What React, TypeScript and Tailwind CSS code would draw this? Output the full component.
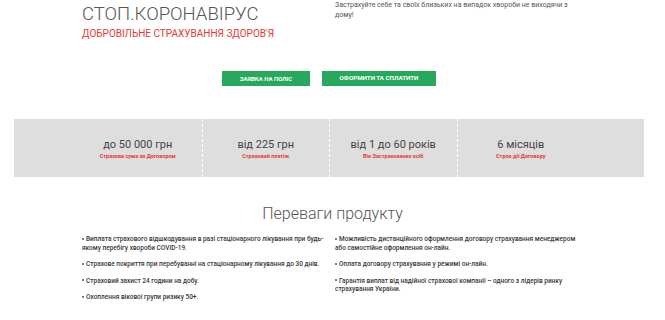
import React from 'react';

const stats = [
  { value: 'до 50 000 грн', label: 'Страхова сума за Договором' },
  { value: 'від 225 грн', label: 'Страховий платіж' },
  { value: 'від 1 до 60 років', label: 'Вік Застрахованих осіб' },
  { value: '6 місяців', label: 'Строк дії Договору' },
];

const leftItems = [
  'Виплата страхового відшкодування в разі стаціонарного лікування при будь-якому перебігу хвороби COVID-19.',
  'Страхове покриття при перебуванні на стаціонарному лікування до 30 днів.',
  'Страховий захист 24 години на добу.',
  'Охоплення вікової групи ризику 50+.',
];

const rightItems = [
  'Можливість дистанційного оформлення договору страхування менеджером або самостійне оформлення он-лайн.',
  'Оплата договору страхування у режимі он-лайн.',
  'Гарантія виплат від надійної страхової компанії – одного з лідерів ринку страхування України.',
];

function BulletList({ items, className }: { items: string[]; className?: string }) {
  return (
    <ul className={className}>
      {items.map((t) => (
        <li key={t} className="mb-[8px] text-[6.5px] leading-[8.5px] font-medium text-[#383838]">
          <span className="mr-[2px] mb-[1.5px] inline-block h-[2px] w-[2px] rounded-full bg-[#555] align-middle" />
          {t}
        </li>
      ))}
    </ul>
  );
}

export default function App() {
  return (
    <div className="w-[665px] h-[320px] overflow-hidden bg-white font-['Roboto',sans-serif]">
      {/* header */}
      <div className="flex h-[71px] pl-[82px]">
        <div className="w-[253px] pt-[5px]">
          <h1 className="text-[18.5px] leading-none font-light text-[#555]">СТОП.КОРОНАВІРУС</h1>
          <p className="mt-[5px] text-[10px] leading-none text-[#e53935]">
            ДОБРОВІЛЬНЕ СТРАХУВАННЯ ЗДОРОВ'Я
          </p>
        </div>
        <p className="w-[236px] text-[7px] leading-[10px] text-[#555]">
          Застрахуйте себе та своїх близьких на випадок хвороби не виходячи з дому!
        </p>
      </div>

      {/* buttons */}
      <div className="flex gap-[12px] pl-[222px]">
        <button className="h-[15px] w-[88px] bg-[#28a85d] text-[6px] font-bold text-white uppercase">
          Заявка на поліс
        </button>
        <button className="h-[15px] w-[114px] bg-[#28a85d] text-[6.2px] font-bold text-white uppercase">
          Оформити та сплатити
        </button>
      </div>

      {/* stats band */}
      <div className="mt-[33px] ml-[14px] h-[58px] w-[630px] bg-[#dedede]">
        <div className="ml-[60px] grid h-full w-[510px] grid-cols-4">
          {stats.map((s, i) => (
            <div
              key={s.value}
              className={
                'flex flex-col items-center pt-[20px] ' +
                (i > 0 ? 'border-l border-dashed border-white' : '')
              }
            >
              <div className="text-[11px] leading-none text-[#444]">{s.value}</div>
              <div className="mt-[3.5px] text-[5.5px] leading-none font-bold text-[#e53935]">
                {s.label}
              </div>
            </div>
          ))}
        </div>
      </div>

      {/* advantages */}
      <h2 className="mt-[29px] text-center text-[16px] leading-none font-light text-[#555]">
        Переваги продукту
      </h2>
      <div className="mt-[13px] flex pl-[82px]">
        <BulletList items={leftItems} className="w-[245px]" />
        <BulletList items={rightItems} className="ml-[8px] w-[250px]" />
      </div>
    </div>
  );
}
